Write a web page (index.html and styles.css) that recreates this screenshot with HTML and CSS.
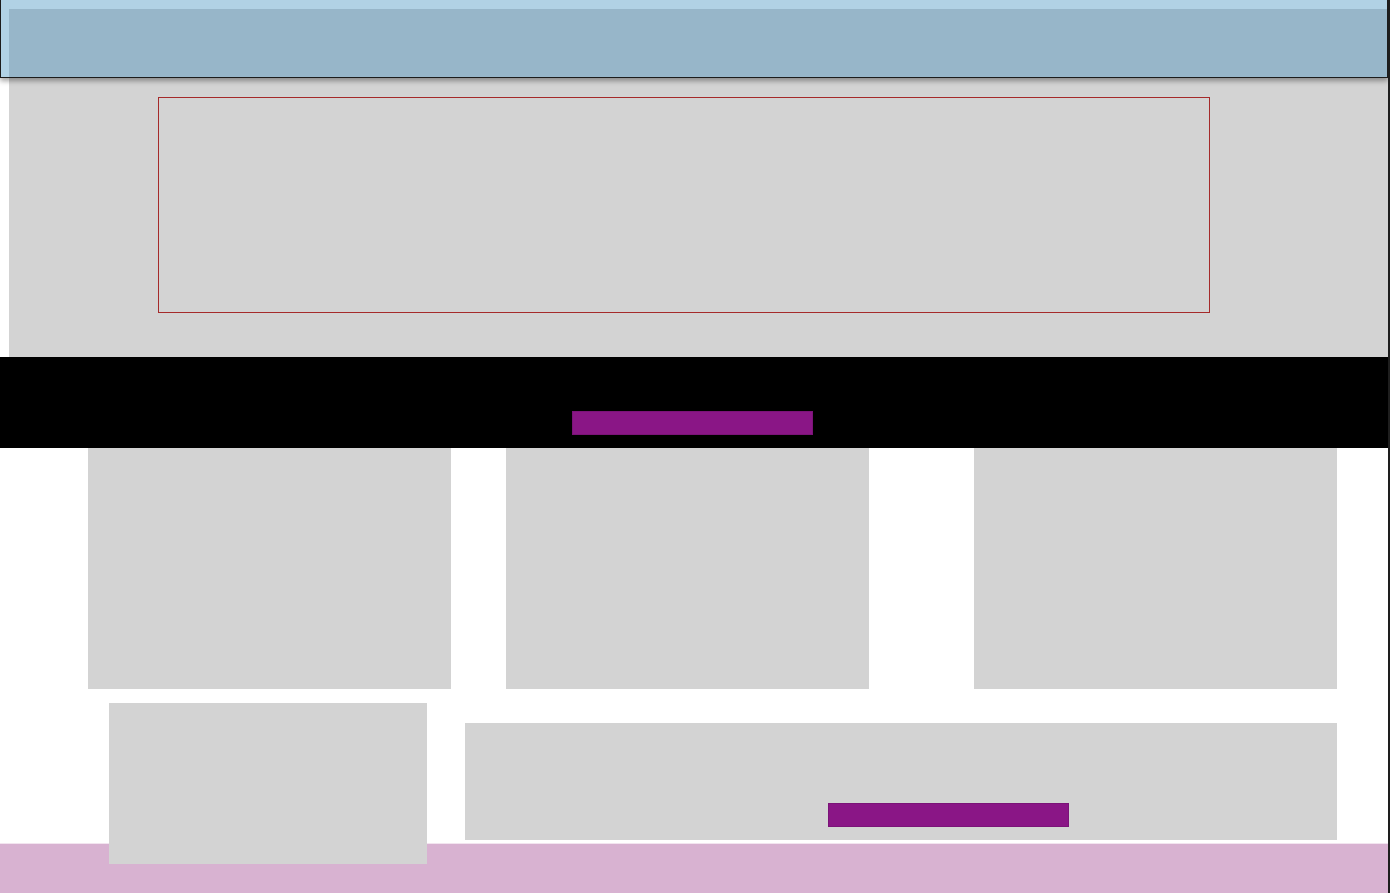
FILE: index.html
```html
<!DOCTYPE html>
<html lang="en">
<head>
<meta charset="utf-8">
<title>Layout</title>
<link rel="stylesheet" href="styles.css">
</head>
<body>
  <header class="header">
    <div class="header__inner"></div>
  </header>
  <section class="hero">
    <div class="hero__frame"></div>
  </section>
  <section class="band">
    <span class="btn"></span>
  </section>
  <section class="cards">
    <div class="card"></div>
    <div class="card card--second"></div>
    <div class="card card--third"></div>
  </section>
  <section class="bottom">
    <div class="bottom__side"></div>
    <div class="bottom__main">
      <span class="btn"></span>
    </div>
  </section>
  <footer class="footer"></footer>
</body>
</html>
```
FILE: styles.css
```css
html {
  background: #1e1e1e;
}
body {
  margin: 0;
  width: 1388px;
  min-height: 893px;
  background: #ffffff;
  font-family: "Liberation Sans", Arial, sans-serif;
}
.header {
  position: relative;
  z-index: 2;
  box-sizing: border-box;
  height: 78px;
  padding: 9px 0 0 8px;
  background: #b1d2e5;
  border: 1px solid #1c1c1c;
  border-top: 0;
  box-shadow: 0 3px 5px rgba(0, 0, 0, 0.35);
}
.header__inner {
  height: 100%;
  background: #97b6c9;
}
.hero {
  box-sizing: border-box;
  height: 279px;
  margin-left: 9px;
  padding-top: 19px;
  background: #d3d3d3;
}
.hero__frame {
  box-sizing: border-box;
  width: 1052px;
  height: 216px;
  margin-left: 149px;
  border: 1px solid #a52a2a;
}
.band {
  box-sizing: border-box;
  height: 91px;
  padding: 54px 0 0 572px;
  background: #000000;
}
.btn {
  display: block;
  box-sizing: border-box;
  width: 241px;
  height: 24px;
  background: #8a1686;
  border: 1px solid #7b1378;
}
.cards {
  display: flex;
  height: 241px;
  padding-left: 88px;
}
.card {
  width: 363px;
  height: 241px;
  background: #d3d3d3;
}
.card--second {
  margin-left: 55px;
}
.card--third {
  margin-left: 105px;
}
.bottom {
  display: flex;
  align-items: flex-start;
  height: 154px;
  padding-left: 109px;
}
.bottom__side {
  position: relative;
  z-index: 1;
  flex: none;
  width: 318px;
  height: 161px;
  margin-top: 14px;
  background: #d3d3d3;
}
.bottom__main {
  box-sizing: border-box;
  flex: none;
  width: 872px;
  height: 117px;
  margin: 34px 0 0 38px;
  padding: 80px 0 0 363px;
  background: #d3d3d3;
}
.footer {
  box-sizing: border-box;
  height: 50px;
  background: #d8b2d1;
  border-top: 1px solid #f2e4ef;
}
```
